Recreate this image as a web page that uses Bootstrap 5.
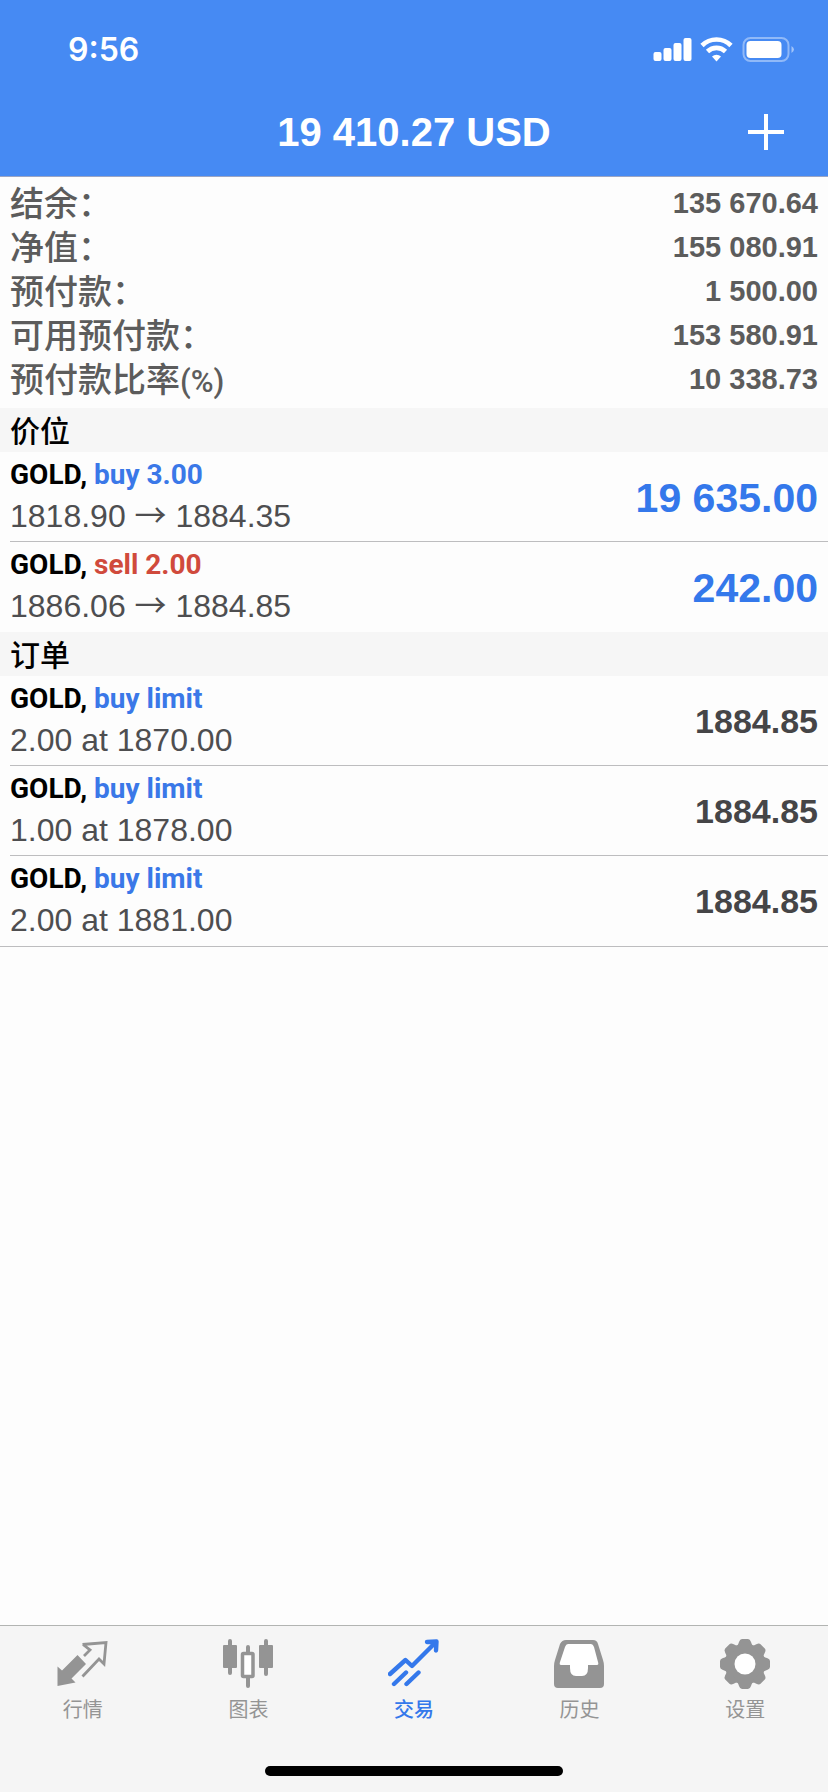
<!DOCTYPE html>
<html lang="zh-CN">
<head>
<meta charset="utf-8">
<meta name="viewport" content="width=device-width, initial-scale=1">
<title>交易</title>
<link rel="stylesheet" href="https://cdn.jsdelivr.net/npm/bootstrap@5.3.0/dist/css/bootstrap.min.css">
<style>
  :root { --head: #468af3; --accent: #3478eb; --grey: #949494; --edge: 10px; }
  body { background: #fdfdfd; font-family: "Liberation Sans", "Noto Sans CJK SC", sans-serif; color: #000; }
  .figure-bold { font-family: "Liberation Sans", "Noto Sans CJK SC", sans-serif; font-weight: 700; }
  .app-head { background: var(--head); color: #fff; border-bottom: 1px solid #9aa5c4; }
  .status { height: 88px; padding: 12px 34px 0 68px; }
  .clock { font: 600 32px/40px Inter, sans-serif; }
  .title-row { height: 88px; padding: 0 44px; display: grid; grid-template-columns: 1fr auto 1fr; align-items: center; }
  .title-row h1 { font-size: 40px; line-height: 58px; }
  .plain-btn { background: none; border: 0; color: inherit; padding: 0; line-height: 0; }
  .summary { padding: 1px var(--edge) 10px; color: #5c5c5c; }
  .summary > div { height: 44px; }
  .summary dt { font: 500 34px/44px "Liberation Sans", "Noto Sans CJK SC", sans-serif; padding-top: 4px; }
  .summary dt span { font-family: Roboto, sans-serif; font-size: 31px; line-height: 1; }
  .summary dd { font-size: 29px; line-height: 50px; }
  .group-head { background: #f6f6f6; padding: 0 var(--edge); font: 500 30px/42px "Noto Sans CJK SC", sans-serif; height: 44px; }
  .trades { border-bottom: 1px solid transparent; }
  .trades.closed { border-bottom-color: #bdbdbf; }
  .trades li { margin-left: var(--edge); padding-right: var(--edge); height: 90px; border-bottom: 1px solid #bdbdbf; }
  .trades li:last-child { border-bottom: 0; height: 89px; }
  .closed li:last-child { height: 90px; }
  .deal { font: 700 28px/40px Roboto, sans-serif; }
  .price { font-size: 32px; line-height: 42px; color: #4e4e50; padding-bottom: 2px; }
  .arrow { font-family: "Noto Sans CJK SC", sans-serif; font-weight: 400; line-height: 1; }
  .profit { font-size: 41px; line-height: 56px; color: var(--accent); padding-top: 2px; }
  .quote { font-size: 34px; line-height: 48px; color: #454547; }
  .buy { color: #3a78e8; }
  .sell { color: #d04a3c; }
  .tabs { background: #f5f5f5; border-top: 1px solid #b2b4b2; padding-top: 12px; }
  .tabs a { color: var(--grey); text-decoration: none; font: 400 20px/28px "Noto Sans CJK SC", sans-serif; gap: 5px; }
  .tabs a.active { color: var(--accent); font-weight: 500; }
  .home-bar { width: 36%; height: 10px; border-radius: 5px; background: #000; margin: 43px auto 16px; }
</style>
</head>
<body>
<div class="min-vh-100 d-flex flex-column">
  <header class="app-head">
    <div class="status d-flex align-items-center justify-content-between">
      <span class="clock">9:56</span>
      <svg width="142" height="26" viewBox="0 0 142 26" fill="#fff" aria-hidden="true">
        <g transform="translate(1.500 0)"><rect x="0" y="15" width="8" height="9" rx="2"/><rect x="10" y="11" width="8" height="13" rx="2"/><rect x="20" y="6" width="8" height="18" rx="2"/><rect x="30" y="1" width="8" height="23" rx="2"/>
        <g fill="none" stroke="#fff" stroke-width="4.600"><path d="M48.500 8.500a20.500 20.500 0 0 1 29 0"/><path d="M54 14.500a13 13 0 0 1 18 0"/></g>
        <path d="M58.500 19.500a6.500 6.500 0 0 1 9 0L63 24.500z"/>
        <rect x="90" y="1" width="45" height="23" rx="7" fill="none" stroke="#fff" stroke-opacity=".4" stroke-width="2"/>
        <rect x="93" y="4" width="35" height="17" rx="4"/><path d="M138 9q5 3.500 0 7z" fill-opacity=".5"/></g>
      </svg>
    </div>
    <div class="title-row">
      <span></span>
      <h1 class="figure-bold m-0">19 410.27 USD</h1>
      <button type="button" class="plain-btn ms-auto" aria-label="新订单"><svg width="36" height="36" viewBox="0 0 36 36" stroke="#fff" stroke-width="4"><path d="M18 0v36M0 18h36"/></svg></button>
    </div>
  </header>
  <main class="flex-grow-1">
    <dl class="summary m-0">
      <div class="d-flex justify-content-between"><dt>结余：</dt><dd class="figure-bold m-0">135 670.64</dd></div>
      <div class="d-flex justify-content-between"><dt>净值：</dt><dd class="figure-bold m-0">155 080.91</dd></div>
      <div class="d-flex justify-content-between"><dt>预付款：</dt><dd class="figure-bold m-0">1 500.00</dd></div>
      <div class="d-flex justify-content-between"><dt>可用预付款：</dt><dd class="figure-bold m-0">153 580.91</dd></div>
      <div class="d-flex justify-content-between"><dt>预付款比率<span>(%)</span></dt><dd class="figure-bold m-0">10 338.73</dd></div>
    </dl>
    <h2 class="group-head m-0">价位</h2>
    <ul class="trades list-unstyled m-0">
      <li class="d-flex align-items-center justify-content-between"><div><div class="deal">GOLD, <span class="buy">buy 3.00</span></div><div class="price">1818.90 <span class="arrow">→</span> 1884.35</div></div><span class="profit figure-bold">19 635.00</span></li>
      <li class="d-flex align-items-center justify-content-between"><div><div class="deal">GOLD, <span class="sell">sell 2.00</span></div><div class="price">1886.06 <span class="arrow">→</span> 1884.85</div></div><span class="profit figure-bold">242.00</span></li>
    </ul>
    <h2 class="group-head m-0">订单</h2>
    <ul class="trades closed list-unstyled m-0">
      <li class="d-flex align-items-center justify-content-between"><div><div class="deal">GOLD, <span class="buy">buy limit</span></div><div class="price">2.00 at 1870.00</div></div><span class="quote figure-bold">1884.85</span></li>
      <li class="d-flex align-items-center justify-content-between"><div><div class="deal">GOLD, <span class="buy">buy limit</span></div><div class="price">1.00 at 1878.00</div></div><span class="quote figure-bold">1884.85</span></li>
      <li class="d-flex align-items-center justify-content-between"><div><div class="deal">GOLD, <span class="buy">buy limit</span></div><div class="price">2.00 at 1881.00</div></div><span class="quote figure-bold">1884.85</span></li>
    </ul>
  </main>
  <footer class="tabs">
    <nav class="row row-cols-5 g-0">
      <a href="#" class="col d-flex flex-column align-items-center">
        <svg width="52" height="52" viewBox="0 0 52 52"><path d="M.5 28.500V48l18-3.500-4-4L29 26l-8.500-9L5 32.500z" fill="currentColor"/><path d="M25.500 6.500 49 4.500l-2 21.500-5-5L25.500 38.500M26 6.500l7 5.500-6 6" fill="none" stroke="currentColor" stroke-width="2.800"/></svg>
        行情</a>
      <a href="#" class="col d-flex flex-column align-items-center">
        <svg width="52" height="52" viewBox="0 0 52 52" fill="currentColor"><rect x="1" y="7" width="14" height="23" rx="1"/><rect x="37" y="7" width="14" height="23" rx="1"/><rect x="20.500" y="15.500" width="10.500" height="23" rx="1" fill="#fff" stroke="currentColor" stroke-width="3.500"/><path d="M8 3v32M44 3v33M26 9v5M26 40v8" stroke="currentColor" stroke-width="4" stroke-linecap="round"/></svg>
        图表</a>
      <a href="#" class="col d-flex flex-column align-items-center active" aria-current="page">
        <svg width="52" height="52" viewBox="0 0 52 52" fill="none" stroke="currentColor" stroke-width="4.400" stroke-linecap="round" stroke-linejoin="round"><path d="M2 36 17.500 22l6.500 6L47 5M39 4l9.500-.5-.5 9M6 46l12-11.500M18.500 46l12-11.500"/><path d="M42 4h6v6z" fill="currentColor" stroke-width="1"/></svg>
        交易</a>
      <a href="#" class="col d-flex flex-column align-items-center">
        <svg width="52" height="52" viewBox="0 0 52 52"><path fill="currentColor" d="M12 2h27q4 0 5 4l5 16q1 3 1 6v18q0 4-4 4H4q-4 0-4-4V28q0-3 1-6L6 6q2-4 6-4z"/><path fill="#fff" d="M14 6q-2 0-3 3L6 24q-1 3 1 3h9v3q0 8 6 8h6q6 0 6-8v-3h9q2 0 1-3L40 9q-1-3-3-3z"/></svg>
        历史</a>
      <a href="#" class="col d-flex flex-column align-items-center">
        <svg width="52" height="52" viewBox="-26 -26 52 52" fill="currentColor">
          <defs><path id="tooth" d="M-10-17Q-7-18-6-22-5-25-3-25H3Q5-25 6-22 7-18 10-17z"/></defs>
          <circle r="20"/>
          <use href="#tooth"/><use href="#tooth" transform="rotate(45)"/><use href="#tooth" transform="rotate(90)"/><use href="#tooth" transform="rotate(135)"/><use href="#tooth" transform="rotate(180)"/><use href="#tooth" transform="rotate(225)"/><use href="#tooth" transform="rotate(270)"/><use href="#tooth" transform="rotate(315)"/>
          <circle r="10.500" fill="#fff"/>
        </svg>
        设置</a>
    </nav>
    <div class="home-bar"></div>
  </footer>
</div>
<script src="https://cdn.jsdelivr.net/npm/bootstrap@5.3.0/dist/js/bootstrap.bundle.min.js"></script>
</body>
</html>
